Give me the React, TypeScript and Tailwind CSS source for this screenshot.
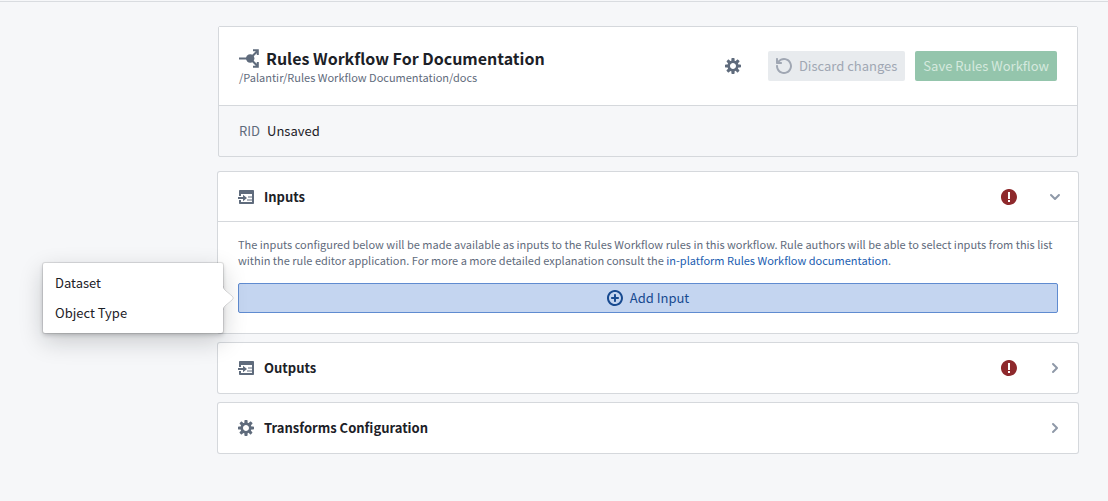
import type { ReactNode } from 'react';

interface IconProps {
  className?: string;
}

const iconPaths = {
  cog: 'M15.19 6.39h-1.85c-.11-.37-.27-.71-.45-1.04l1.36-1.36c.31-.31.31-.82 0-1.13l-1.13-1.13c-.31-.31-.82-.31-1.13 0l-1.36 1.36c-.33-.17-.67-.33-1.04-.44V.79c0-.44-.36-.8-.8-.8h-1.6c-.44 0-.8.36-.8.8v1.86c-.39.12-.75.28-1.1.47l-1.3-1.3c-.3-.3-.79-.3-1.09 0L1.82 2.91c-.3.3-.3.79 0 1.09l1.3 1.3c-.2.34-.36.7-.48 1.09H.79c-.44 0-.8.36-.8.8v1.6c0 .44.36.8.8.8h1.85c.11.37.27.71.45 1.04l-1.36 1.36c-.31.31-.31.82 0 1.13l1.13 1.13c.31.31.82.31 1.13 0l1.36-1.36c.33.18.67.33 1.04.44v1.86c0 .44.36.8.8.8h1.6c.44 0 .8-.36.8-.8v-1.86c.39-.12.75-.28 1.1-.47l1.3 1.3c.3.3.79.3 1.09 0l1.09-1.09c.3-.3.3-.79 0-1.09l-1.3-1.3c.19-.35.36-.71.48-1.1h1.85c.44 0 .8-.36.8-.8v-1.6a.816.816 0 00-.81-.79zm-7.2 4.6c-1.66 0-3-1.34-3-3s1.34-3 3-3 3 1.34 3 3-1.34 3-3 3z',
  reset:
    'M8 0C5.6 0 3.5 1.1 2 2.8V1c0-.6-.4-1-1-1S0 .4 0 1v4c0 .6.4 1 1 1h4c.6 0 1-.4 1-1s-.4-1-1-1H3.5C4.6 2.8 6.2 2 8 2c3.3 0 6 2.7 6 6s-2.7 6-6 6-6-2.7-6-6c0-.6-.4-1-1-1s-1 .4-1 1c0 4.4 3.6 8 8 8s8-3.6 8-8-3.6-8-8-8z',
  add: 'M10.99 6.99h-2v-2c0-.55-.45-1-1-1s-1 .45-1 1v2h-2c-.55 0-1 .45-1 1s.45 1 1 1h2v2c0 .55.45 1 1 1s1-.45 1-1v-2h2c.55 0 1-.45 1-1s-.45-1-1-1zm-3-7c-4.42 0-8 3.58-8 8s3.58 8 8 8 8-3.58 8-8-3.58-8-8-8zm0 14c-3.31 0-6-2.69-6-6s2.69-6 6-6 6 2.69 6 6-2.68 6-6 6z',
  error:
    'M7.99-.01c-4.42 0-8 3.58-8 8s3.58 8 8 8 8-3.58 8-8-3.58-8-8-8zm1 13h-2v-2h2v2zm0-3h-2v-7h2v7z',
  chevronDown:
    'M12 5c-.28 0-.53.11-.71.29L8 8.59l-3.29-3.3a1.003 1.003 0 00-1.42 1.42l4 4c.18.18.43.29.71.29s.53-.11.71-.29l4-4A1.003 1.003 0 0012 5z',
  chevronRight:
    'M10.71 7.29l-4-4a1.003 1.003 0 00-1.42 1.42L8.59 8 5.3 11.29c-.19.18-.3.43-.3.71a1.003 1.003 0 001.71.71l4-4c.18-.18.29-.43.29-.71 0-.28-.11-.53-.29-.71z',
};

function Icon({ name, className }: IconProps & { name: keyof typeof iconPaths }) {
  return (
    <svg viewBox="0 0 16 16" aria-hidden="true" className={`size-4 shrink-0 fill-current ${className ?? ''}`}>
      <path fillRule="evenodd" d={iconPaths[name]} />
    </svg>
  );
}

function WorkflowIcon() {
  return (
    <svg viewBox="0 0 20 20" aria-hidden="true" className="size-5 shrink-0 text-[#5f6b7c]">
      <circle cx="11.2" cy="10.500" r="4.200" fill="currentColor" />
      <path
        d="M0 10.500h8M13 8.500l5-5M13 12.500l5 5M14 2.300h4.800v4.700M14 18.700h4.800v-4.700"
        fill="none"
        stroke="currentColor"
        strokeWidth="2"
      />
    </svg>
  );
}

function ImportTableIcon() {
  return (
    <svg viewBox="0 0 16 16" aria-hidden="true" className="size-4 shrink-0 text-[#5f6b7c]">
      <path
        fill="currentColor"
        fillRule="evenodd"
        d="M2 1h13c.55 0 1 .45 1 1v12c0 .55-.45 1-1 1H2c-.55 0-1-.45-1-1v-3h2v2h11v-1.500H9v-1h5V8.500H10v-1h4V5H3v2H1V2c0-.55.45-1 1-1z"
      />
      <path fill="currentColor" d="M0 8h5V5.700L9 9l-4 3.300V10H0z" />
    </svg>
  );
}

interface SectionProps {
  icon: ReactNode;
  title: string;
  hasError?: boolean;
  open?: boolean;
  children?: ReactNode;
}

function Section({ icon, title, hasError, open, children }: SectionProps) {
  return (
    <section className="rounded-xs bg-white ring-1 ring-[#d5d8dc]">
      <button type="button" aria-expanded={!!open} className="flex h-[50px] w-full items-center px-5 text-left">
        {icon}
        <span className="ml-[10px] flex-1 text-[13px] leading-5 font-bold">{title}</span>
        {hasError && <Icon name="error" className="mr-[30px] text-[#8e292c]" />}
        <Icon name={open ? 'chevronDown' : 'chevronRight'} className="-mr-[5px] text-[#8f99a8]" />
      </button>
      {children}
    </section>
  );
}

function InputMenu() {
  return (
    <div
      role="menu"
      className="absolute top-1/2 right-full mr-[15px] w-[180px] -translate-y-1/2 rounded-xs bg-white p-[5px] shadow-[0_0_0_1px_rgba(17,20,24,0.1),0_2px_4px_rgba(17,20,24,0.2),0_8px_24px_rgba(17,20,24,0.2)]"
    >
      <svg viewBox="0 0 11 24" aria-hidden="true" className="absolute top-1/2 left-full h-6 w-[11px] -translate-y-1/2">
        <path d="M0 0c0 2 1 3 3 5l6 5c1.500 1.300 1.500 2.700 0 4l-6 5c-2 2-3 3-3 5z" fill="#fff" />
        <path
          d="M0 0c0 2 1 3 3 5l6 5c1.500 1.300 1.500 2.700 0 4l-6 5c-2 2-3 3-3 5"
          fill="none"
          stroke="#111418"
          strokeOpacity=".15"
        />
      </svg>
      {['Dataset', 'Object Type'].map((label) => (
        <button
          key={label}
          type="button"
          role="menuitem"
          className="block w-full rounded-xs px-[7px] py-[5px] text-left text-[13px] leading-5"
        >
          {label}
        </button>
      ))}
    </div>
  );
}

export default function App() {
  return (
    <div className="min-h-screen bg-[#f6f7f9] pt-px font-['Noto_Sans_CJK_JP',sans-serif] text-[#1c2127]">
      <main className="border-t border-[#d9dce0] pt-6 pr-[30px] pb-10 pl-[218px]">
        <header className="rounded-xs border border-[#d5d8dc]">
          <div className="flex items-center border-b border-[#d5d8dc] bg-white px-5 py-[19px]">
            <div className="min-w-0 flex-1 pb-[2px]">
              <h1 className="flex items-center gap-[7px] text-base leading-6 font-bold">
                <WorkflowIcon />
                Rules Workflow For Documentation
              </h1>
              <p className="text-[11px] leading-[14px] text-[#5f6b7c]">
                /Palantir/Rules Workflow Documentation/docs
              </p>
            </div>
            <button type="button" aria-label="Settings" className="mr-5 p-[7px] text-[#5f6b7c]">
              <Icon name="cog" />
            </button>
            <button
              type="button"
              disabled
              className="mr-[10px] flex h-[30px] items-center gap-[7px] rounded-xs bg-[#e8ebee] px-2 text-[13px] leading-5 text-[#a0a7b3]"
            >
              <Icon name="reset" />
              Discard changes
            </button>
            <button
              type="button"
              disabled
              className="h-[30px] rounded-xs bg-[#94c5ac] px-2 text-[13px] leading-5 text-[#d5e9de]"
            >
              Save Rules Workflow
            </button>
          </div>
          <dl className="flex gap-[7px] px-5 py-[15px] text-[13px] leading-5">
            <dt className="text-[#5f6b7c]">RID</dt>
            <dd>Unsaved</dd>
          </dl>
        </header>

        <div className="mt-[15px] flex flex-col gap-[10px]">
          <Section icon={<ImportTableIcon />} title="Inputs" hasError open>
            <div className="-mt-px border-t border-[#d5d8dc] px-5 pt-[14px] pb-5">
              <p className="text-[11px] leading-4 text-[#5f6b7c]">
                The inputs configured below will be made available as inputs to the Rules Workflow rules in this
                workflow. Rule authors will be able to select inputs from this list within the rule editor application.
                For more a more detailed explanation consult the{' '}
                <a href="#docs" className="inline-block text-[#215db0]">
                  in-platform Rules Workflow documentation
                </a>
                .
              </p>
              <div className="relative mt-[15px]">
                <button
                  type="button"
                  aria-haspopup="menu"
                  className="flex h-[30px] w-full items-center justify-center gap-[7px] rounded-xs border border-[#5f8bd0] bg-[#c4d5f0] text-[13px] leading-5 text-[#184a90]"
                >
                  <Icon name="add" />
                  Add Input
                </button>
                <InputMenu />
              </div>
            </div>
          </Section>
          <Section icon={<ImportTableIcon />} title="Outputs" hasError />
          <Section icon={<Icon name="cog" className="text-[#5f6b7c]" />} title="Transforms Configuration" />
        </div>
      </main>
    </div>
  );
}
